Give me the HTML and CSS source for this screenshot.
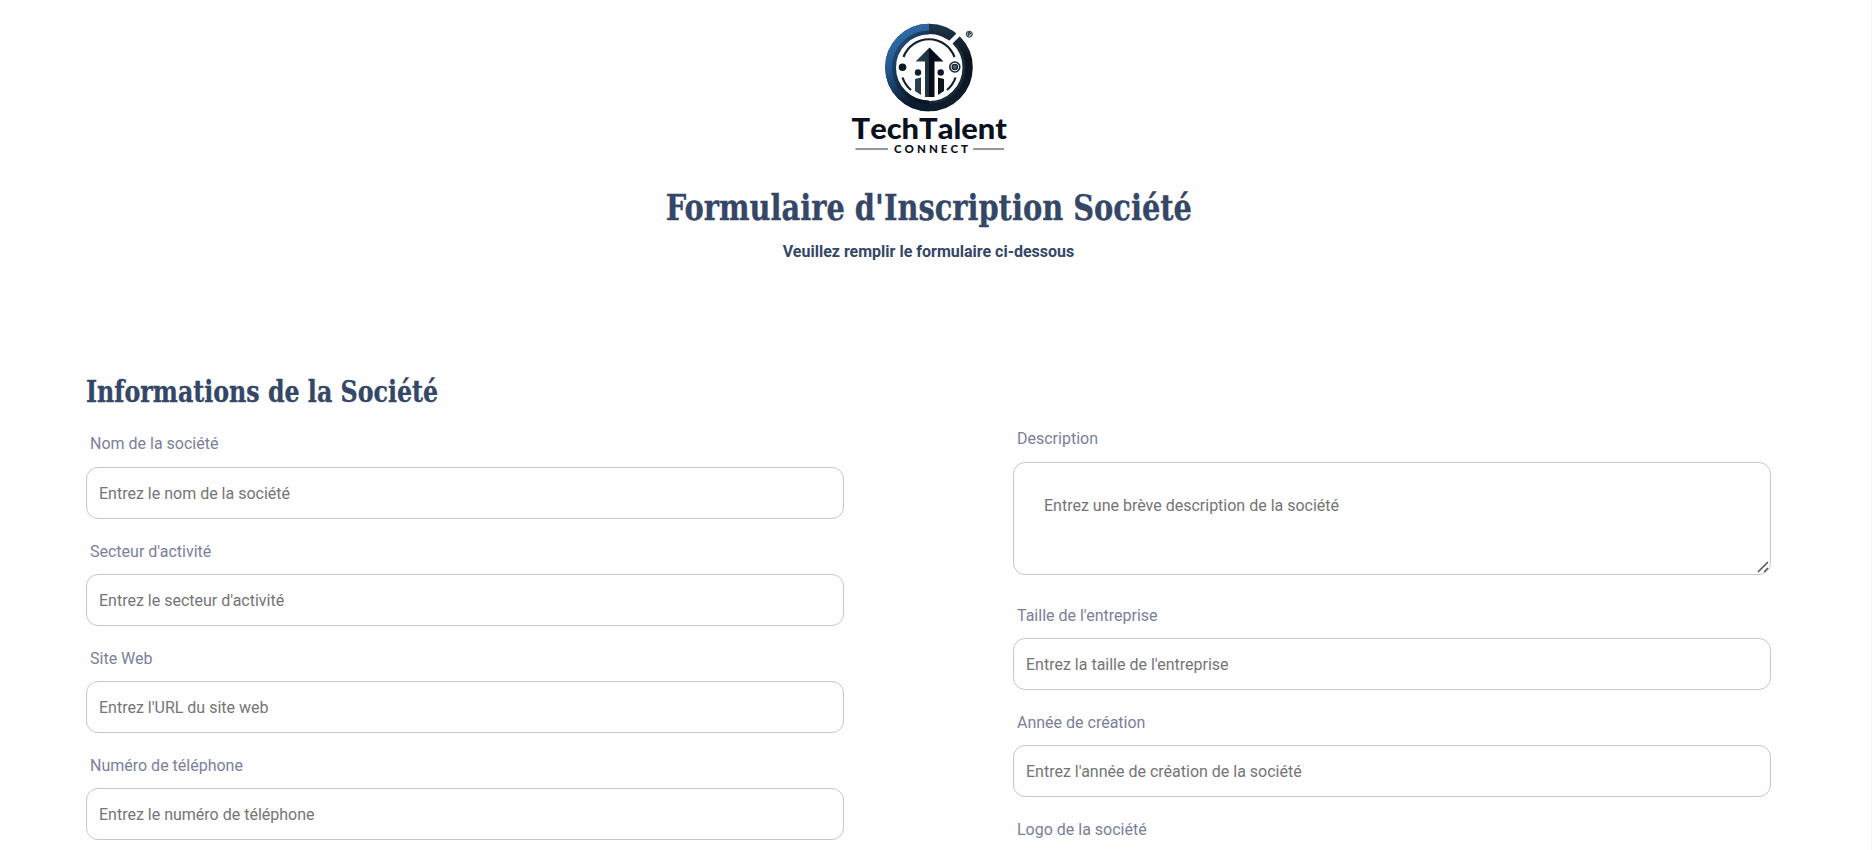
FILE: index.html
```html
<!DOCTYPE html>
<html lang="fr">
<head>
<meta charset="utf-8">
<title>Formulaire d'Inscription Société</title>
<link rel="stylesheet" href="styles.css">
</head>
<body>
<main class="page">
  <header class="header">
    <svg class="logo" viewBox="840 10 180 150" role="img" aria-label="TechTalent Connect">
      <defs>
        <linearGradient id="light" x1="0" y1="0" x2="0.3" y2="1"><stop offset="0" stop-color="#3474b4"/><stop offset="0.5" stop-color="#23558c"/><stop offset="1" stop-color="#0b1c30"/></linearGradient>
        <linearGradient id="blue" x1="0" y1="0" x2="0.6" y2="1"><stop offset="0" stop-color="#255488"/><stop offset="0.5" stop-color="#153454"/><stop offset="1" stop-color="#0a1420"/></linearGradient>
        <linearGradient id="dark" x1="0" y1="0" x2="0" y2="1"><stop offset="0" stop-color="#1c3346"/><stop offset="0.4" stop-color="#0a121d"/><stop offset="1" stop-color="#101e2c"/></linearGradient>
        <linearGradient id="bar" x1="0" y1="0" x2="1" y2="0"><stop offset="0" stop-color="#2c4350"/><stop offset="0.5" stop-color="#1c303d"/><stop offset="0.5" stop-color="#070d18"/><stop offset="1" stop-color="#0c1621"/></linearGradient>
      </defs>
      <circle cx="929" cy="67.500" r="39.800" fill="none" stroke="url(#dark)" stroke-width="8"/>
      <path d="M929 27.700A39.800 39.800 0 0 0 929 107.300" fill="none" stroke="url(#light)" stroke-width="8"/>
      <path d="M929 32.500A35 35 0 0 0 929 102.500" fill="none" stroke="url(#blue)" stroke-width="4"/>
      <path d="M929 32.500A35 35 0 0 1 929 102.500" fill="none" stroke="#182a39" stroke-width="3"/>
      <path d="M950 43L962 31" stroke="#fff" stroke-width="4.500"/>
      <path d="M903.500 57A27.200 27.200 0 0 1 954.500 57M902.500 77.500A28 28 0 0 0 911 90M955.500 77.500A28 28 0 0 1 947 90" fill="none" stroke="#0f1f2c" stroke-width="2.200"/>
      <path d="M929.500 47.500L943.500 61.500H934.500V97H925V61.500H915.500Z" fill="url(#bar)"/>
      <path d="M915 79L921 77.500V95L915 91ZM938 77.500L944 79V91L938 95Z" fill="url(#bar)"/>
      <circle cx="902.500" cy="67.200" r="3.800" fill="#0b1724"/>
      <circle cx="918" cy="72.500" r="3.200" fill="#10202d"/>
      <circle cx="940.700" cy="72.500" r="3.200" fill="#0b1724"/>
      <circle cx="954.800" cy="67" r="5" fill="#fff" stroke="#1a2834" stroke-width="1.600"/>
      <circle cx="954.800" cy="67" r="2.600" fill="#54606b" stroke="#17232e" stroke-width="1.400"/>
      <circle cx="969.300" cy="34.200" r="3" fill="#aeb5bc" stroke="#2b3640" stroke-width="1"/>
      <path d="M968.300 36V32.500H970L970.500 34H968.500" fill="none" stroke="#2b3640" stroke-width="1"/>
      <text class="logo-name" x="851.500" y="139" textLength="155.500" lengthAdjust="spacingAndGlyphs">TechTalent</text>
      <text class="logo-tag" x="894" y="153.300" textLength="74" lengthAdjust="spacing">CONNECT</text>
      <path d="M855.500 149H888M973 149H1004" stroke="#28323d" stroke-width="1.200"/>
    </svg>
    <h1 class="title"><span>Formulaire d'Inscription Société</span></h1>
    <p class="subtitle">Veuillez remplir le formulaire ci-dessous</p>
  </header>
  <form class="form">
    <h2 class="section-title"><span>Informations de la Société</span></h2>
    <div class="columns">
      <div class="column column-main">
        <label class="field"><span class="label">Nom de la société</span><input class="control" type="text" placeholder="Entrez le nom de la société"></label>
        <label class="field"><span class="label">Secteur d'activité</span><input class="control" type="text" placeholder="Entrez le secteur d'activité"></label>
        <label class="field"><span class="label">Site Web</span><input class="control" type="url" placeholder="Entrez l'URL du site web"></label>
        <label class="field"><span class="label">Numéro de téléphone</span><input class="control" type="tel" placeholder="Entrez le numéro de téléphone"></label>
      </div>
      <div class="column">
        <label class="field field-area"><span class="label">Description</span><textarea class="control area" placeholder="Entrez une brève description de la société"></textarea><svg class="grip" viewBox="0 0 12 12"><path d="M1 11L11 1M7 11L11 7"/></svg></label>
        <label class="field"><span class="label">Taille de l'entreprise</span><input class="control" type="text" placeholder="Entrez la taille de l'entreprise"></label>
        <label class="field"><span class="label">Année de création</span><input class="control" type="text" placeholder="Entrez l'année de création de la société"></label>
        <div class="field"><span class="label">Logo de la société</span></div>
      </div>
    </div>
  </form>
</main>
</body>
</html>
```
FILE: styles.css
```css
* { box-sizing: border-box; }
body {
  margin: 0;
  height: 850px;
  overflow: hidden;
  background: #fefefe;
  border-right: 1px solid #f8f8f8;
  color: #344767;
  font-family: Roboto, sans-serif;
  font-size: 16px;
}
.page { width: 1858px; height: 850px; padding: 10px 87px 0 86px; overflow: hidden; }
.header { display: flex; flex-direction: column; align-items: center; height: 350px; }
.logo { display: block; width: 180px; height: 150px; margin-left: 2px; }
.logo-name { font: 900 28px Lato, sans-serif; font-kerning: none; fill: #0a111c; }
.logo-tag { font: 900 11.500px Lato, sans-serif; fill: #0a111c; }
.title, .section-title {
  margin: 0;
  font-family: "Roboto Slab", "DejaVu Serif Condensed", "DejaVu Serif", serif;
  font-weight: 700;
  white-space: nowrap;
  -webkit-text-stroke: 0.3px #344767;
}
.title span, .section-title span { display: inline-block; }
.title { margin-top: 23px; font-size: 35px; line-height: 50px; }
.title span { transform: scaleX(0.917); }
.subtitle { margin: 7px 0 0; font-weight: 700; line-height: 24px; }
.section-title { height: 60px; font-size: 29px; line-height: 64px; }
.section-title span { transform: scaleX(0.909); transform-origin: left; }
.columns { display: grid; grid-template-columns: 758px 758px; justify-content: space-between; }
.column-main { padding-top: 5px; }
.field { display: block; position: relative; height: 107px; }
.field-area { height: 176px; }
.field:last-child { height: auto; }
.label { display: block; height: 42px; padding-left: 4px; line-height: 40px; color: #7b809a; }
.field:first-child .label { line-height: 38px; }
.control {
  display: block;
  width: 100%;
  height: 52px;
  margin: 0;
  padding: 0 12px;
  border: 1px solid #c7c7c7;
  border-radius: 12px;
  background: transparent;
  font: 16px Roboto, sans-serif;
  outline: none;
}
.control::placeholder { color: #757575; }
.area { height: 113px; padding: 32px 30px; line-height: 22px; resize: none; }
.grip {
  position: absolute;
  top: 141px;
  right: 2px;
  width: 12px;
  height: 12px;
  fill: none;
  stroke: #505050;
  stroke-width: 1.5;
}
```
